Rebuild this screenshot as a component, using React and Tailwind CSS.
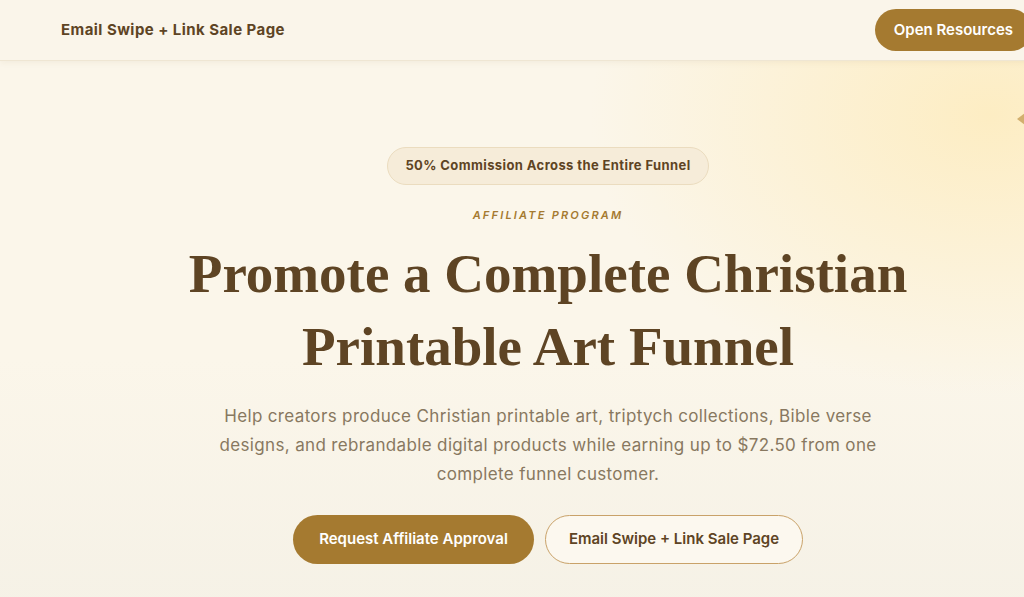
export default function App() {
  const sans = { fontFamily: 'Inter, "Open Sans", sans-serif' };
  return (
    <div className="w-[1096px] min-h-[597px] bg-[#fbf6ea] relative overflow-hidden" style={sans}>
      {/* background glows */}
      <div className="absolute inset-0 bg-[radial-gradient(ellipse_400px_280px_at_990px_115px,#fdedc3_0%,rgba(253,237,195,0.6)_40%,rgba(251,246,234,0)_100%)]" />
      <div className="absolute inset-0 bg-[linear-gradient(180deg,rgba(251,246,234,0)_60%,rgba(245,241,230,0.9)_100%)]" />

      {/* header */}
      <header className="relative z-10 h-[61px] flex items-center justify-between pl-[61px] pr-[64px] bg-[#faf5ea] border-b border-[#efe6d3] shadow-[0_2px_6px_rgba(120,90,40,0.06)]">
        <span className="text-[15px] font-bold text-[#5e4424] tracking-[0.45px]">Email Swipe + Link Sale Page</span>
        <button className="h-[42px] px-[19px] rounded-full bg-[#a57a30] text-white text-[15px] font-semibold">
          Open Resources
        </button>
      </header>

      {/* decorative shape */}
      <div className="absolute left-[1017px] top-[113px] w-0 h-0 border-t-[6px] border-b-[6px] border-r-[8px] border-t-transparent border-b-transparent border-r-[#c79f57] opacity-80" />

      {/* hero */}
      <main className="relative z-10 flex flex-col items-center pt-[86px]">
        <div className="h-[38px] px-[17px] flex items-center rounded-full bg-[#f6ecd9] border border-[#ebdcbf] text-[13px] font-bold text-[#5e4424] tracking-[0.4px]">
          50% Commission Across the Entire Funnel
        </div>
        <div className="mt-[22px] h-[16px] leading-[16px] text-[11px] font-semibold italic tracking-[0.2em] text-[#a57a30]">
          AFFILIATE PROGRAM
        </div>
        <h1
          className="mt-[14px] text-center text-[55px] leading-[73px] font-bold text-[#5e4424]"
          style={{ fontFamily: '"Liberation Serif", "DejaVu Serif", serif' }}
        >
          Promote a Complete Christian
          <br />
          Printable Art Funnel
        </h1>
        <p className="mt-[19px] text-center text-[17px] leading-[29px] text-[#887860] tracking-[0.35px]">
          Help creators produce Christian printable art, triptych collections, Bible verse
          <br />
          designs, and rebrandable digital products while earning up to $72.50 from one
          <br />
          complete funnel customer.
        </p>
        <div className="mt-[26px] flex gap-[11px]">
          <button className="h-[49px] w-[241px] rounded-full bg-[#a57a30] text-white text-[15px] font-semibold">
            Request Affiliate Approval
          </button>
          <button className="h-[49px] w-[258px] rounded-full bg-[#fcf8ef] border border-[#c9a269] text-[#5e4424] text-[15px] font-semibold">
            Email Swipe + Link Sale Page
          </button>
        </div>
      </main>
    </div>
  );
}
